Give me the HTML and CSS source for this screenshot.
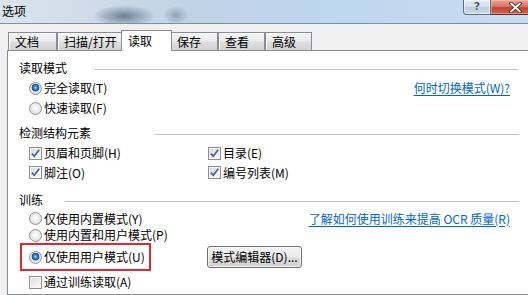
FILE: index.html
```html
<!DOCTYPE html>
<html lang="zh-CN">
<head>
<meta charset="utf-8">
<title>选项</title>
<link rel="stylesheet" href="styles.css">
</head>
<body>
<div class="window">
  <div class="titlebar">
    <span class="title">选项</span>
    <div class="caption">
      <div class="cbtn help"><span class="help-glyph">?</span></div>
      <div class="cbtn close">
        <svg width="13" height="11" viewBox="0 0 13 11"><path d="M2 1.5 L11 9.5 M11 1.5 L2 9.5" stroke="#3a1a14" stroke-width="3.4" stroke-linecap="round"/><path d="M2 1.5 L11 9.5 M11 1.5 L2 9.5" stroke="#ffffff" stroke-width="2" stroke-linecap="round"/></svg>
      </div>
    </div>
  </div>
  <div class="client">
    <div class="tabs">
      <div class="tab tab-first">文档</div>
      <div class="tab tab-wide">扫描/打开</div>
      <div class="tab tab-selected">读取</div>
      <div class="tab tab-save">保存</div>
      <div class="tab">查看</div>
      <div class="tab">高级</div>
    </div>
    <div class="panel">
      <div class="content">
        <div class="ghead"><span>读取模式</span><i class="gline gline-1"></i></div>
        <div class="row h20 split">
          <label class="opt"><span class="radio checked"></span>完全读取(T)</label>
          <a class="link">何时切换模式(W)?</a>
        </div>
        <div class="row h20">
          <label class="opt"><span class="radio"></span>快速读取(F)</label>
        </div>

        <div class="ghead g2"><span>检测结构元素</span><i class="gline gline-2"></i></div>
        <div class="row h20 cols">
          <label class="opt"><span class="check checked"><svg width="11" height="11" viewBox="0 0 11 11"><path d="M1.8 5.6 L4.3 8.2 L9.2 1.8" fill="none" stroke="#4b62a0" stroke-width="1.8"/></svg></span>页眉和页脚(H)</label>
          <label class="opt"><span class="check checked"><svg width="11" height="11" viewBox="0 0 11 11"><path d="M1.8 5.6 L4.3 8.2 L9.2 1.8" fill="none" stroke="#4b62a0" stroke-width="1.8"/></svg></span>目录(E)</label>
        </div>
        <div class="row h19 cols">
          <label class="opt"><span class="check checked"><svg width="11" height="11" viewBox="0 0 11 11"><path d="M1.8 5.6 L4.3 8.2 L9.2 1.8" fill="none" stroke="#4b62a0" stroke-width="1.8"/></svg></span>脚注(O)</label>
          <label class="opt"><span class="check checked"><svg width="11" height="11" viewBox="0 0 11 11"><path d="M1.8 5.6 L4.3 8.2 L9.2 1.8" fill="none" stroke="#4b62a0" stroke-width="1.8"/></svg></span>编号列表(M)</label>
        </div>

        <div class="ghead g3"><span>训练</span><i class="gline gline-3"></i></div>
        <div class="row h17 split">
          <label class="opt"><span class="radio"></span>仅使用内置模式(Y)</label>
          <a class="link">了解如何使用训练来提高 OCR 质量(R)</a>
        </div>
        <div class="row h16">
          <label class="opt"><span class="radio"></span>使用内置和用户模式(P)</label>
        </div>
        <div class="row h28 cols">
          <label class="opt highlight"><span class="radio checked"></span>仅使用用户模式(U)</label>
          <button class="btn">模式编辑器(D)...</button>
        </div>
        <div class="row h22">
          <label class="opt"><span class="check"></span>通过训练读取(A)</label>
        </div>
      </div>
    </div>
  </div>
</div>
</body>
</html>
```

FILE: styles.css
```css
* {
  box-sizing: border-box;
  margin: 0;
  padding: 0;
}

html, body {
  width: 528px;
  height: 295px;
  overflow: hidden;
}

body {
  font-family: "Noto Sans CJK SC", "Noto Sans", sans-serif;
  font-size: 12px;
  color: #000;
  background: #f0f0f0;
}

.window {
  width: 528px;
  height: 295px;
  display: flex;
  flex-direction: column;
  overflow: hidden;
}

/* ---------- title bar ---------- */
.titlebar {
  flex: none;
  height: 24px;
  display: flex;
  align-items: flex-start;
  border-bottom: 1px solid #7d8fa2;
  background:
    radial-gradient(ellipse 32px 11px at 124px 16px, rgba(78, 98, 122, 0.75), rgba(78, 98, 122, 0) 100%),
    radial-gradient(ellipse 13px 9px at 176px 15px, rgba(96, 116, 140, 0.5), rgba(96, 116, 140, 0) 100%),
    linear-gradient(to right, #dbe4ee 0, #d2dde9 70px, #c0d3e6 190px, #bed6ee 320px, #c6dcf1 528px);
}

.title {
  padding: 2px 0 0 2px;
  line-height: 17px;
}

.caption {
  margin-left: auto;
  margin-right: -8px;
  display: flex;
}

.cbtn {
  height: 15px;
  display: flex;
  align-items: center;
  justify-content: center;
  border: 1px solid #5d6f84;
  border-top: none;
}

.help {
  width: 28px;
  border-radius: 0 0 0 4px;
  background: linear-gradient(#e4ecf5 0, #d3dfec 50%, #bccdde 52%, #c9d9ea 100%);
  box-shadow: inset 0 0 0 1px rgba(255, 255, 255, 0.55);
}

.help-glyph {
  font-family: "DejaVu Sans", sans-serif;
  font-weight: bold;
  font-size: 11px;
  line-height: 12px;
  color: #4a5564;
  text-shadow: 0 0 1px #fff, 0 0 1px #fff;
}

.close {
  width: 45px;
  border-color: #6b2c24;
  border-left: none;
  background: linear-gradient(#e9a595 0, #d9786a 45%, #c4432f 55%, #d0674c 100%);
  box-shadow: inset 0 0 0 1px rgba(255, 200, 190, 0.45);
  justify-content: flex-start;
  padding-left: 18px;
}

/* ---------- client area ---------- */
.client {
  flex: 1;
  padding-top: 6px;
  display: flex;
  flex-direction: column;
}

.tabs {
  flex: none;
  display: flex;
  align-items: flex-start;
  height: 21px;
  margin-bottom: -1px;
  padding-left: 8px;
  position: relative;
  z-index: 1;
}

.tab {
  width: 47px;
  height: 18px;
  margin-top: 2px;
  padding-left: 6px;
  line-height: 17px;
  white-space: nowrap;
  border: 1px solid #898c95;
  border-bottom: none;
  background: linear-gradient(#f4f4f4 0, #ececec 45%, #dedede 55%, #d3d3d3 100%);
  box-shadow: inset 1px 1px 0 #fbfbfb;
}

.tab-first { width: 49px; }
.tab-wide { width: 66px; }
.tab-save { width: 48px; }

.tab-selected {
  width: 51px;
  height: 21px;
  margin: 0 -2px;
  padding-top: 1px;
  line-height: 17px;
  background: #fff;
  box-shadow: none;
  position: relative;
  z-index: 2;
}

.panel {
  flex: 1;
  width: 540px;
  margin-left: 7px;
  border: 1px solid #898c95;
  background: #fff;
  padding: 7px 0 0 11px;
}

.content {
  width: 500px;
  display: flex;
  flex-direction: column;
}

/* ---------- group headers ---------- */
.ghead {
  height: 20px;
  display: flex;
  align-items: center;
  line-height: 16px;
}

.g2 { margin-top: 5px; }
.g3 { margin-top: 8px; }

.gline {
  margin-left: auto;
  margin-top: 2px;
  height: 1px;
  background: #c3c3c3;
}

.gline-1 { width: 424px; margin-right: 1px; }
.gline-2 { width: 364px; }
.gline-3 { width: 454px; }

/* ---------- option rows ---------- */
.row {
  display: flex;
  align-items: center;
  padding-left: 10px;
  line-height: 16px;
}

.h16 { height: 16px; }
.h17 { height: 17px; }
.h19 { height: 19px; }
.h20 { height: 20px; }
.h22 { height: 22px; }
.h28 { height: 28px; }

.split {
  justify-content: space-between;
}

.cols {
  display: grid;
  grid-template-columns: 179px auto;
  align-items: center;
  justify-items: start;
}

.opt {
  display: inline-flex;
  align-items: center;
  white-space: nowrap;
}

.radio,
.check {
  flex: none;
  width: 13px;
  height: 13px;
  margin-right: 2px;
  display: inline-flex;
  align-items: center;
  justify-content: center;
}

.radio {
  border-radius: 50%;
  border: 1px solid #8f9295;
  background: radial-gradient(circle at 50% 45%, #ffffff 0, #eeeeee 40%, #d2d2d2 100%);
}

.radio.checked {
  background:
    radial-gradient(circle at 50% 42%, #9fd6ff 0, #3b8fe0 1.6px, #1c5cac 3px, #2a5a94 3.6px, rgba(255, 255, 255, 0) 4.2px),
    radial-gradient(circle at 50% 45%, #ffffff 0, #eeeeee 40%, #d2d2d2 100%);
}

.check {
  border: 1px solid #8f8f8f;
  background: linear-gradient(135deg, #d6d6d6 0, #f0f0f0 60%, #fbfbfb 100%);
  box-shadow: inset 0 0 0 1px #f6f6f6;
}

.link {
  margin-right: 9px;
  color: #0066cc;
  text-decoration: underline;
  text-underline-offset: 2px;
  white-space: nowrap;
  cursor: pointer;
}

.highlight {
  margin-left: -9px;
  height: 28px;
  padding: 0 4px 0 7px;
  border: 2px solid #e4262e;
}

.btn {
  margin-left: -1px;
  width: 95px;
  height: 22px;
  font-family: inherit;
  font-size: 12px;
  line-height: 16px;
  color: #000;
  border: 1px solid #707070;
  border-radius: 3px;
  background: linear-gradient(#f2f2f2 0, #ebebeb 48%, #dddddd 52%, #cfcfcf 100%);
  box-shadow: inset 0 0 0 1px rgba(255, 255, 255, 0.7);
}
```
